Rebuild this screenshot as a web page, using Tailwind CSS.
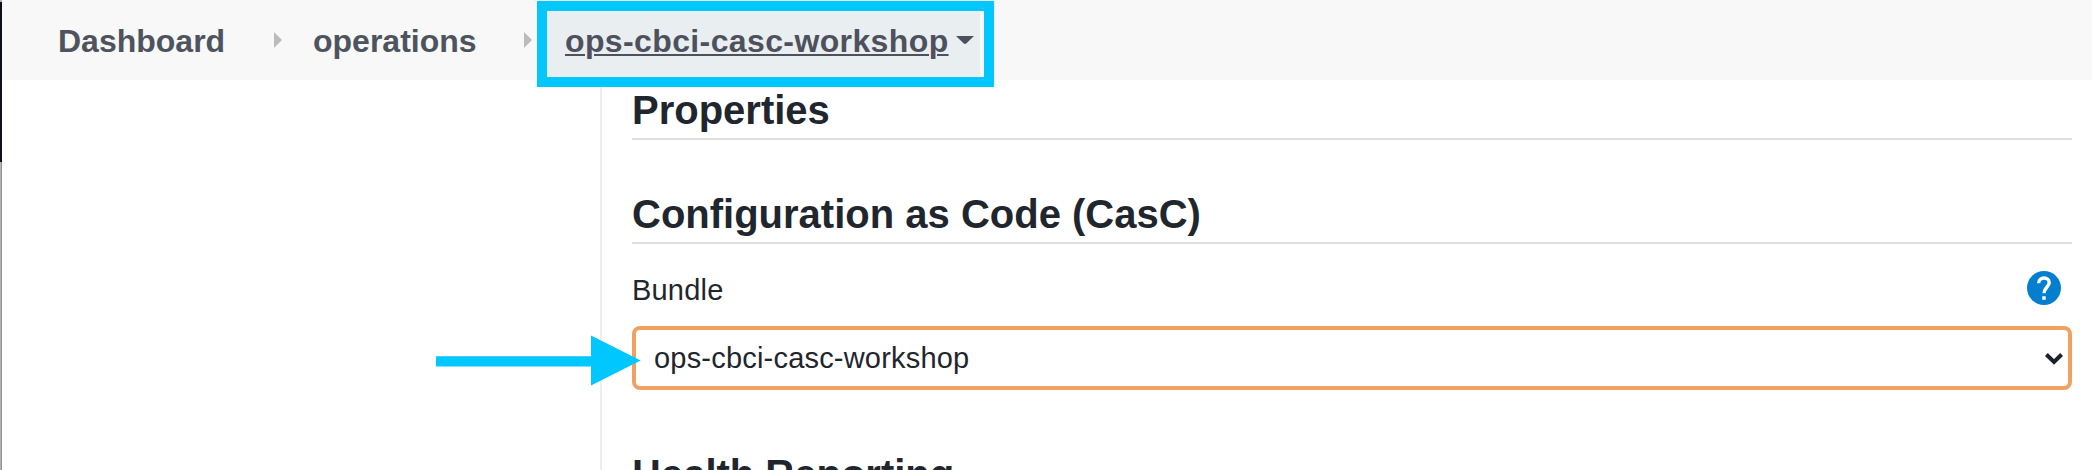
<!DOCTYPE html>
<html lang="en">
<head>
<meta charset="utf-8">
<title>Configuration</title>
<script src="https://cdn.jsdelivr.net/npm/@tailwindcss/browser@4"></script>
</head>
<body class="relative flex h-[470px] w-[2092px] overflow-hidden bg-white font-['Liberation_Sans',Arial,sans-serif] text-[#1f262e]">
  <div class="flex w-[2px] shrink-0 flex-col">
    <div class="h-[2px] bg-[#b4b4b4]"></div>
    <div class="h-40 bg-[#0c1119]"></div>
    <div class="flex-1 border-r border-[#8f8f8f] bg-[#b4b4b4]"></div>
  </div>
  <div class="flex min-w-0 flex-1 flex-col">
    <header class="flex h-20 shrink-0 items-stretch bg-[#f8f8f8] pl-14 text-[32px] leading-[82px] font-bold text-[#4d545e]">
      <a class="w-[214px]">Dashboard</a>
      <svg class="mt-8 mr-[31px] ml-[2px] h-4 w-2 shrink-0" viewBox="0 0 8 16"><path d="M0 0L8 8L0 16Z" fill="#bbb"/></svg>
      <a class="w-[211px]">operations</a>
      <svg class="mt-8 mr-4 h-4 w-2 shrink-0" viewBox="0 0 8 16"><path d="M0 0L8 8L0 16Z" fill="#bbb"/></svg>
      <div class="flex w-[432px] bg-[#e9eef1] pl-[17px] text-[#4e515d]">
        <a class="w-[391px] tracking-[0.38px] whitespace-nowrap underline decoration-2 underline-offset-[2px]">ops-cbci-casc-workshop</a>
        <svg class="mt-9 h-2 w-[18px] shrink-0" viewBox="0 0 18 8"><path d="M0 0H18L10.5 7.3Q9 8.7 7.5 7.3Z" fill="#4e515d"/></svg>
      </div>
    </header>
    <div class="flex min-h-0 flex-1">
      <aside class="w-[600px] shrink-0 border-r-2 border-[#e9eef2]"></aside>
      <main class="w-[1470px] shrink-0 overflow-hidden pt-1.5 pl-[30px]">
        <h2 class="border-b-2 border-[#dedede] pb-1 text-[40px] leading-[48px] font-bold">Properties</h2>
        <h2 class="mt-[50px] border-b-2 border-[#dedede] pb-1 text-[40px] leading-[48px] font-bold">Configuration as Code (CasC)</h2>
        <div class="mt-[27px] flex h-[35px] justify-between pr-[11px]">
          <label class="pt-[3px] text-[29px] leading-[33px] tracking-[0.2px]">Bundle</label>
          <svg class="h-[34px] w-[34px]" viewBox="0 0 34 34"><circle cx="17" cy="17" r="17" fill="#047fcf"/><path d="M11.6 12.2C11.6 9 14 7 17 7s5.2 2 5.2 4.8c0 4-5.2 4.6-5.2 10.4" fill="none" stroke="#fff" stroke-width="3.4"/><path d="M15.2 25.2h3.5v3.6h-3.5z" fill="#fff"/></svg>
        </div>
        <div class="mt-5 flex h-16 items-center justify-between rounded-lg border-4 border-[#f0a060] pr-[5px] pl-[18px] text-[29px] leading-[33px]">
          <span class="tracking-[0.2px]">ops-cbci-casc-workshop</span>
          <svg class="mt-[1px] h-3 w-[18px]" viewBox="0 0 18 12"><path d="M1.4 1.5L9 9L16.6 1.5" fill="none" stroke="#1b222c" stroke-width="4"/></svg>
        </div>
        <h2 class="mt-[60px] text-[40px] leading-[48px] font-bold">Health Reporting</h2>
      </main>
    </div>
  </div>
  <div class="absolute top-px left-[537px] h-[86px] w-[457px] border-[10px] border-[#00c8ff]"></div>
  <svg class="absolute top-[335px] left-[436px] h-[51px] w-[205px]" viewBox="0 0 205 51"><path d="M0 21.2H155V0.5L204.7 25.5L155 50.5V31.5H0Z" fill="#00c8ff"/></svg>
</body>
</html>
